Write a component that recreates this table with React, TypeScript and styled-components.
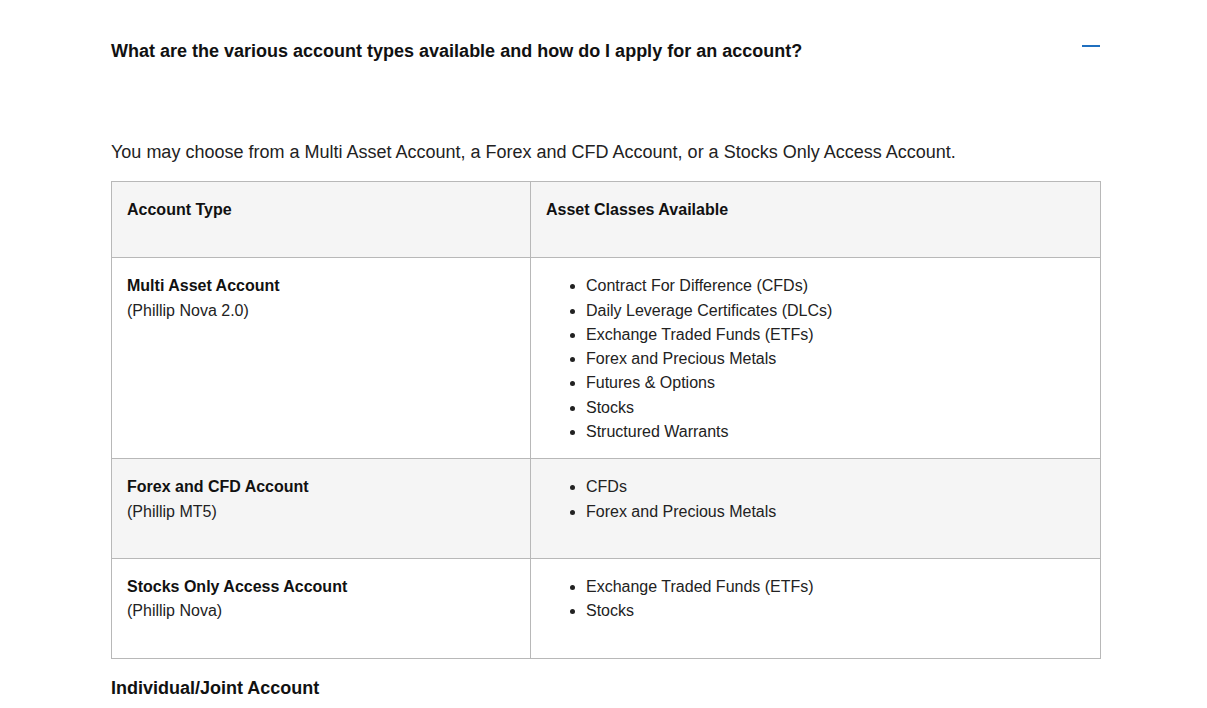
import React from "react";
import styled, { createGlobalStyle } from "styled-components";

const Global = createGlobalStyle`
  html, body { margin: 0; padding: 0; background: #fff; }
  body { font-family: "Liberation Sans", Arial, sans-serif; color: #222; }
  * { box-sizing: border-box; }
`;

const Page = styled.div`
  width: 990px;
  margin-left: 111px;
`;

const QuestionRow = styled.div`
  display: flex;
  align-items: flex-start;
  justify-content: space-between;
  padding-top: 39px;
  height: 120px;
`;

const Question = styled.h3`
  margin: 0;
  font-size: 18px;
  line-height: 24px;
  font-weight: 700;
  color: #111;
`;

const Minus = styled.span`
  display: block;
  width: 18px;
  height: 2px;
  background: #1f6fbf;
  margin-top: 6px;
  margin-right: 1px;
`;

const Intro = styled.p`
  margin: 20px 0 17px;
  font-size: 18px;
  line-height: 24px;
  color: #222;
`;

const Table = styled.table`
  width: 100%;
  border-collapse: collapse;
  border: 1px solid #b8b8b8;
  font-size: 16px;
  line-height: 24.3px;
`;

const Row = styled.tr<{ $shade?: boolean }>`
  background: ${(p) => (p.$shade ? "#f5f5f5" : "#fff")};
`;

const Cell = styled.td<{ $w?: string }>`
  border: 1px solid #b8b8b8;
  vertical-align: top;
  padding: 16px 15px 15px 15px;
  width: ${(p) => p.$w ?? "auto"};
  color: #222;
`;

const CellText = styled.p<{ $gap?: number }>`
  margin: 0 0 ${(p) => p.$gap ?? 19}px;
`;

const Strong = styled.strong`
  font-weight: 700;
  color: #111;
`;

const List = styled.ul`
  margin: 0 0 -1px;
  padding-left: 40px;
`;

const SubHeading = styled.h4`
  margin: 17px 0 0;
  font-size: 18px;
  line-height: 24px;
  font-weight: 700;
  color: #111;
`;

const rows = [
  {
    name: "Multi Asset Account",
    sub: "(Phillip Nova 2.0)",
    items: [
      "Contract For Difference (CFDs)",
      "Daily Leverage Certificates (DLCs)",
      "Exchange Traded Funds (ETFs)",
      "Forex and Precious Metals",
      "Futures & Options",
      "Stocks",
      "Structured Warrants",
    ],
  },
  {
    name: "Forex and CFD Account",
    sub: "(Phillip MT5)",
    items: ["CFDs", "Forex and Precious Metals"],
  },
  {
    name: "Stocks Only Access Account",
    sub: "(Phillip Nova)",
    items: ["Exchange Traded Funds (ETFs)", "Stocks"],
  },
];

export default function App() {
  return (
    <>
      <Global />
      <Page>
        <QuestionRow>
          <Question>
            What are the various account types available and how do I apply for an account?
          </Question>
          <Minus />
        </QuestionRow>
        <Intro>
          You may choose from a Multi Asset Account, a Forex and CFD Account, or a Stocks Only Access Account.
        </Intro>
        <Table>
          <tbody>
            <Row $shade>
              <Cell $w="419px">
                <CellText $gap={20}>
                  <Strong>Account Type</Strong>
                </CellText>
              </Cell>
              <Cell>
                <CellText $gap={20}>
                  <Strong>Asset Classes Available</Strong>
                </CellText>
              </Cell>
            </Row>
            {rows.map((r, i) => (
              <Row key={r.name} $shade={i === 1}>
                <Cell>
                  <CellText>
                    <Strong>{r.name}</Strong>
                    <br />
                    {r.sub}
                  </CellText>
                </Cell>
                <Cell>
                  <List>
                    {r.items.map((it) => (
                      <li key={it}>{it}</li>
                    ))}
                  </List>
                </Cell>
              </Row>
            ))}
          </tbody>
        </Table>
        <SubHeading>Individual/Joint Account</SubHeading>
      </Page>
    </>
  );
}
